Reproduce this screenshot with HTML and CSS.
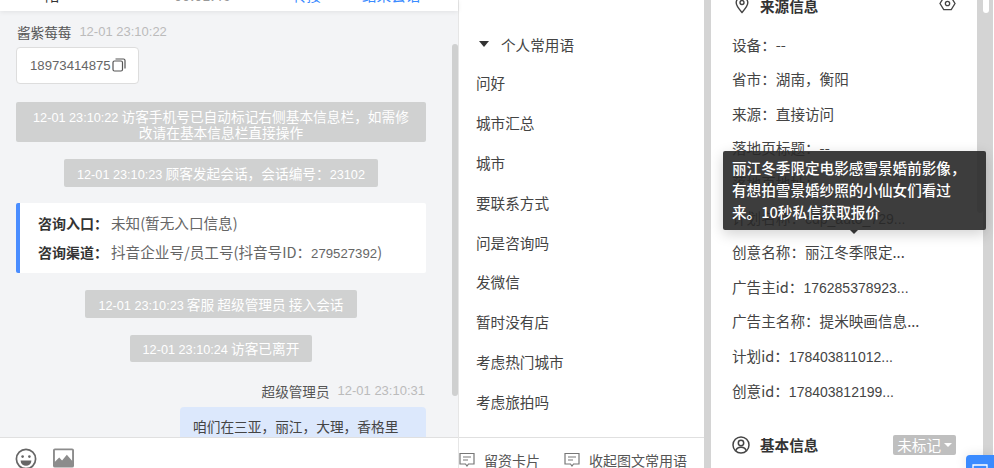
FILE: index.html
```html
<!DOCTYPE html>
<html>
<head>
    <title>会话详情</title>
    <link rel="stylesheet" href="styles.css">
</head>
<body>

<div class="page">
    <!-- Chat column -->
    <section class="chat">
        <div class="chat-head">
            <span class="head-a">陪</span>
            <span class="head-b">-</span>
            <span class="head-c">00:01:46</span>
            <span class="head-link head-d">转接</span>
            <span class="head-link head-e">结束会话</span>
        </div>

        <div class="chat-body">
            <div class="msg-meta">
                <span class="msg-name">酱紫莓莓</span>
                <span class="msg-time">12-01 23:10:22</span>
            </div>
            <div class="phone-card">
                <span>18973414875</span>
                <svg class="copy-icon" viewBox="0 0 14 14" width="14" height="14" fill="none" stroke="#555" stroke-width="1.2">
                    <rect x="1" y="3" width="9.5" height="10" rx="1.5"/>
                    <path d="M3.5 1h8a1.5 1.5 0 0 1 1.5 1.5v8"/>
                </svg>
            </div>

            <div class="notice notice-wide"><span class="ts">12-01 23:10:22</span> 访客手机号已自动标记右侧基本信息栏，如需修改请在基本信息栏直接操作</div>
            <div class="notice notice-a"><span class="ts">12-01 23:10:23</span> 顾客发起会话，会话编号：<span class="ts">23102</span></div>

            <div class="source-card">
                <div class="source-row"><b>咨询入口：</b>未知(暂无入口信息)</div>
                <div class="source-row"><b>咨询渠道：</b>抖音企业号/员工号(抖音号ID：<span class="num">279527392</span>)</div>
            </div>

            <div class="notice notice-b"><span class="ts">12-01 23:10:23</span> 客服 超级管理员 接入会话</div>
            <div class="notice notice-c"><span class="ts">12-01 23:10:24</span> 访客已离开</div>

            <div class="msg-meta msg-meta-right">
                <span class="msg-name">超级管理员</span>
                <span class="msg-time">12-01 23:10:31</span>
            </div>
            <div class="bubble">咱们在三亚，丽江，大理，香格里</div>

            <div class="chat-scroll"></div>
        </div>

        <div class="chat-tools">
            <svg viewBox="0 0 22 22" width="22" height="22" fill="none" stroke="#666" stroke-width="1.7">
                <circle cx="11" cy="11" r="9.6"/>
                <circle cx="7.6" cy="8.6" r="1.3" fill="#666" stroke="none"/>
                <circle cx="14.4" cy="8.6" r="1.3" fill="#666" stroke="none"/>
                <path d="M5.6 12.4h10.8a5.4 5.4 0 0 1-10.800 0z" fill="#666" stroke="none"/>
            </svg>
            <svg viewBox="0 0 22 20" width="21" height="20">
                <path d="M2 0h18a2 2 0 0 1 2 2v16a2 2 0 0 1-2 2H2a2 2 0 0 1-2-2V2a2 2 0 0 1 2-2zm0 2v12l4.500-4.500 3 3 5-6L20 13V2z" fill="#8c8c8c" fill-rule="evenodd"/>
            </svg>
        </div>
    </section>

    <!-- Common phrases -->
    <section class="phrases">
        <div class="phrase-list">
            <div class="phrase-title"><span class="caret"></span>个人常用语</div>
            <div class="phrase">问好</div>
            <div class="phrase">城市汇总</div>
            <div class="phrase">城市</div>
            <div class="phrase">要联系方式</div>
            <div class="phrase">问是咨询吗</div>
            <div class="phrase">发微信</div>
            <div class="phrase">暂时没有店</div>
            <div class="phrase">考虑热门城市</div>
            <div class="phrase">考虑旅拍吗</div>
        </div>
        <div class="phrase-tools">
            <span class="tool">
                <svg viewBox="0 0 16 16" width="16" height="16" fill="none" stroke="#777" stroke-width="1.2">
                    <path d="M1 1.500h14v10.500H9.500L8 14l-1.500-2H1z"/>
                    <path d="M4 5h8M4 8h5"/>
                </svg>
                留资卡片
            </span>
            <span class="tool">
                <svg viewBox="0 0 16 16" width="16" height="16" fill="none" stroke="#777" stroke-width="1.2">
                    <path d="M1 1.500h14v10.500H9.500L8 14l-1.500-2H1z"/>
                    <path d="M4 5h8M4 8h5"/>
                </svg>
                收起图文常用语
            </span>
        </div>
    </section>
    <div class="phrase-scroll"></div>

    <!-- Visitor info -->
    <section class="info">
        <div class="info-head info-head-top">
            <svg viewBox="0 0 14 18" width="14" height="18" fill="none" stroke="#444" stroke-width="1.4">
                <path d="M7 16.500C4 13 1.200 10 1.200 6.800a5.800 5.800 0 0 1 11.600 0C12.800 10 10 13 7 16.500z"/>
                <circle cx="7" cy="6.500" r="2"/>
            </svg>
            <span class="info-title">来源信息</span>
            <svg class="eye" viewBox="0 0 18 16" width="17" height="15" fill="none" stroke="#444" stroke-width="1.400">
                <path d="M5 1.500h8L17 8l-4 6.500H5L1 8z"/>
                <circle cx="9" cy="8" r="2.300"/>
            </svg>
        </div>
        <div class="info-row">设备：--</div>
        <div class="info-row">省市：湖南，衡阳</div>
        <div class="info-row">来源：直接访问</div>
        <div class="info-row">落地页标题：--</div>
        <div class="info-row">落地页地址：</div>
        <div class="info-row">计划名称：<span class="num">cdp_auto_729...</span></div>
        <div class="info-row">创意名称：丽江冬季限定...</div>
        <div class="info-row">广告主id：<span class="num">176285378923...</span></div>
        <div class="info-row">广告主名称：提米映画信息...</div>
        <div class="info-row">计划id：<span class="num">178403811012...</span></div>
        <div class="info-row">创意id：<span class="num">178403812199...</span></div>
        <div class="info-head info-head-basic">
            <svg viewBox="0 0 18 18" width="18" height="18" fill="none" stroke="#444" stroke-width="1.500">
                <circle cx="9" cy="9" r="8"/>
                <circle cx="9" cy="7" r="2.700"/>
                <path d="M3.800 14.800c.6-2.500 2.600-3.600 5.200-3.600s4.600 1.100 5.200 3.600"/>
            </svg>
            <span class="info-title">基本信息</span>
            <span class="tag">未标记<span class="tag-caret"></span></span>
        </div>
        <div class="info-scroll"></div>
    </section>
    <div class="page-scroll"><div class="page-thumb"></div></div>

    <!-- Tooltip over the info rows -->
    <div class="tooltip">丽江冬季限定电影感雪景婚前影像，有想拍雪景婚纱照的小仙女们看过来。10秒私信获取报价</div>

    <div class="float-btn">
        <svg viewBox="0 0 16 4" width="16" height="4" fill="none" stroke="#fff" stroke-width="1.300">
            <path d="M1 4V1h14v3"/>
        </svg>
    </div>
</div>

</body>
</html>
```

FILE: styles.css
```css
/* Basic styling */
html, body {
    margin: 0;
    height: 100%;
    overflow: hidden;
}
body {
    font-family: "Noto Sans CJK SC", "Liberation Sans", sans-serif;
    font-size: 14.6px;
    color: #444;
    background: #fff;
}
.page {
    position: relative;
    display: flex;
    width: 994px;
    height: 468px;
    overflow: hidden;
}
.num {
    font-family: "Liberation Sans", sans-serif;
    font-size: 13.2px;
}
.info .num {
    font-size: 14px;
}
.ts {
    font-family: "Liberation Sans", sans-serif;
    font-size: 12.7px;
}

/* Chat column */
.chat {
    display: flex;
    flex-direction: column;
    width: 459px;
    flex-shrink: 0;
    background: #f3f4f6;
    border-right: 1px solid #e6e6e6;
    box-sizing: border-box;
}
.chat-head {
    position: relative;
    height: 11px;
    flex-shrink: 0;
    background: #fff;
    box-shadow: 0 1px 5px rgba(0, 0, 0, 0.08);
    overflow: hidden;
    z-index: 1;
}
.chat-head span {
    position: absolute;
    top: -15px;
    line-height: 20px;
}
.head-a { left: 45px; color: #333; }
.head-b { left: 117px; color: #333; }
.head-c { left: 174px; color: #999; }
.head-d { left: 292px; }
.head-e { left: 362px; }
.head-link { color: #3a8bff; }

.chat-body {
    position: relative;
    flex: 1;
    min-height: 0;
    padding: 12px 0 0 16px;
    overflow: hidden;
}
.msg-meta {
    display: flex;
    gap: 8px;
    height: 18px;
    line-height: 18px;
    font-size: 13.6px;
}
.msg-name {
    margin-left: 1px;
    color: #555;
}
.msg-time {
    color: #bbb;
    font-family: "Liberation Sans", sans-serif;
    font-size: 13px;
}
.msg-meta-right {
    justify-content: flex-end;
    width: 409px;
    margin-top: 20px;
}
.phone-card {
    display: flex;
    align-items: center;
    box-sizing: border-box;
    width: 123px;
    height: 37px;
    margin-top: 6px;
    padding-left: 13px;
    background: #fff;
    border: 1px solid #ddd;
    border-radius: 4px;
    color: #666;
    font-family: "Liberation Sans", sans-serif;
    font-size: 13.2px;
}
.copy-icon { flex-shrink: 0; margin-top: -1px; margin-left: 1px; }
.notice {
    box-sizing: border-box;
    background: #d0d1d1;
    border-radius: 2px;
    color: #fff;
    font-size: 13.7px;
    text-align: center;
}
.notice-wide {
    width: 410px;
    height: 40px;
    margin-top: 18px;
    padding: 7px 16px 0;
    line-height: 14px;
}
.notice-a {
    width: 314px;
    height: 28px;
    margin: 17px 0 0 48px;
    line-height: 28px;
}
.notice-b {
    width: 272px;
    height: 28px;
    margin: 17px 0 0 69px;
    line-height: 28px;
}
.notice-c {
    width: 182px;
    height: 27px;
    margin: 17px 0 0 114px;
    line-height: 27px;
}
.source-card {
    box-sizing: border-box;
    width: 410px;
    height: 70px;
    margin-top: 16px;
    padding: 9px 0 0 18px;
    background: #fff;
    border-left: 4px solid #4a8dff;
    border-radius: 2px;
    color: #666;
    font-size: 14.6px;
}
.source-row {
    height: 29px;
    line-height: 22px;
    white-space: nowrap;
}
.source-row b {
    display: inline-block;
    width: 73px;
    color: #333;
    font-size: 14px;
}
.bubble {
    box-sizing: border-box;
    width: 246px;
    height: 40px;
    margin: 7px 0 0 164px;
    padding: 9px 0 0 13px;
    background: #dce8fc;
    border-radius: 4px;
    color: #444;
    font-size: 13.7px;
    line-height: 20px;
    white-space: nowrap;
}
.chat-scroll {
    position: absolute;
    right: 0;
    top: 33px;
    width: 6px;
    height: 352px;
    background: #cfd0d0;
    border-radius: 3px;
}
.chat-tools {
    display: flex;
    gap: 16px;
    align-items: flex-start;
    height: 31px;
    flex-shrink: 0;
    box-sizing: border-box;
    padding: 10px 0 0 15px;
    background: #fff;
    border-top: 1px solid #e0e0e0;
}

/* Common phrases */
.phrases {
    display: flex;
    flex-direction: column;
    width: 245px;
    flex-shrink: 0;
    background: #fff;
}
.phrase-list {
    flex: 1;
    min-height: 0;
    padding: 34px 0 0 17px;
    color: #444;
}
.phrase-title {
    display: flex;
    align-items: center;
    height: 20px;
    margin-bottom: 9px;
}
.caret {
    width: 0;
    height: 0;
    margin: 0 12px 0 3px;
    border-left: 5px solid transparent;
    border-right: 5px solid transparent;
    border-top: 6px solid #333;
}
.phrase {
    height: 39.900px;
    line-height: 39.900px;
}
.phrase-tools {
    display: flex;
    justify-content: flex-end;
    gap: 24px;
    align-items: center;
    height: 31px;
    flex-shrink: 0;
    box-sizing: border-box;
    padding: 13px 17px 0 0;
    border-top: 1px solid #e0e0e0;
    color: #555;
    font-size: 14px;
    white-space: nowrap;
}
.tool {
    display: flex;
    align-items: center;
    gap: 9px;
}
.phrase-scroll {
    width: 7px;
    flex-shrink: 0;
    background: #d4d4d4;
}

/* Visitor info */
.info {
    position: relative;
    box-sizing: border-box;
    width: 272px;
    flex-shrink: 0;
    padding: 0 0 0 21px;
    background: #fff;
    color: #444;
}
.info-head {
    display: flex;
    align-items: center;
    gap: 10px;
    padding-right: 27px;
}
.info-head-top {
    height: 14px;
    margin-top: -2px;
    margin-bottom: 15.600px;
}
.info-head-top svg:first-child { margin-left: 3px; margin-right: 1px; }
.info-head-top .eye { margin-top: -4px; }
.info-head-basic {
    margin-top: 23.400px;
    height: 26px;
    gap: 10px;
}
.info-title {
    color: #333;
    font-weight: 700;
}
.eye { margin-left: auto; }
.info-row {
    height: 34.600px;
    line-height: 34.600px;
    white-space: nowrap;
}
.tag {
    display: flex;
    align-items: center;
    gap: 3px;
    box-sizing: border-box;
    height: 20px;
    margin-left: auto;
    padding: 0 4px;
    background: #bfbfbf;
    border-radius: 2px;
    color: #fff;
}
.tag-caret {
    width: 0;
    height: 0;
    border-left: 4px solid transparent;
    border-right: 4px solid transparent;
    border-top: 4px solid #fff;
}
.info-scroll {
    position: absolute;
    right: 0;
    top: 0;
    width: 6px;
    height: 213px;
    background: #d4d4d4;
    border-radius: 0 0 3px 3px;
}
.page-scroll {
    width: 10px;
    flex-shrink: 0;
    background: #d4d4d4;
}
.page-thumb {
    width: 6px;
    height: 13px;
    background: #fff;
    border-radius: 0 0 3px 3px;
}

/* Overlays */
.tooltip {
    position: absolute;
    left: 723px;
    top: 151px;
    box-sizing: border-box;
    width: 263px;
    height: 79px;
    padding: 6px 9px 0;
    background: rgba(40, 40, 40, 0.9);
    border-radius: 2px;
    box-shadow: 0 4px 14px rgba(0, 0, 0, 0.18);
    color: #fff;
    font-weight: 500;
    line-height: 22px;
}
.tooltip::after {
    content: "";
    position: absolute;
    left: 127px;
    bottom: -4px;
    border-left: 4px solid transparent;
    border-right: 4px solid transparent;
    border-top: 4px solid #333;
}
.float-btn {
    position: absolute;
    left: 966px;
    top: 455px;
    display: flex;
    justify-content: center;
    align-items: flex-end;
    width: 28px;
    height: 13px;
    background: #3a8bff;
    border-radius: 4px 0 0 0;
    box-shadow: 0 0 12px rgba(0, 0, 0, 0.12);
}
```
